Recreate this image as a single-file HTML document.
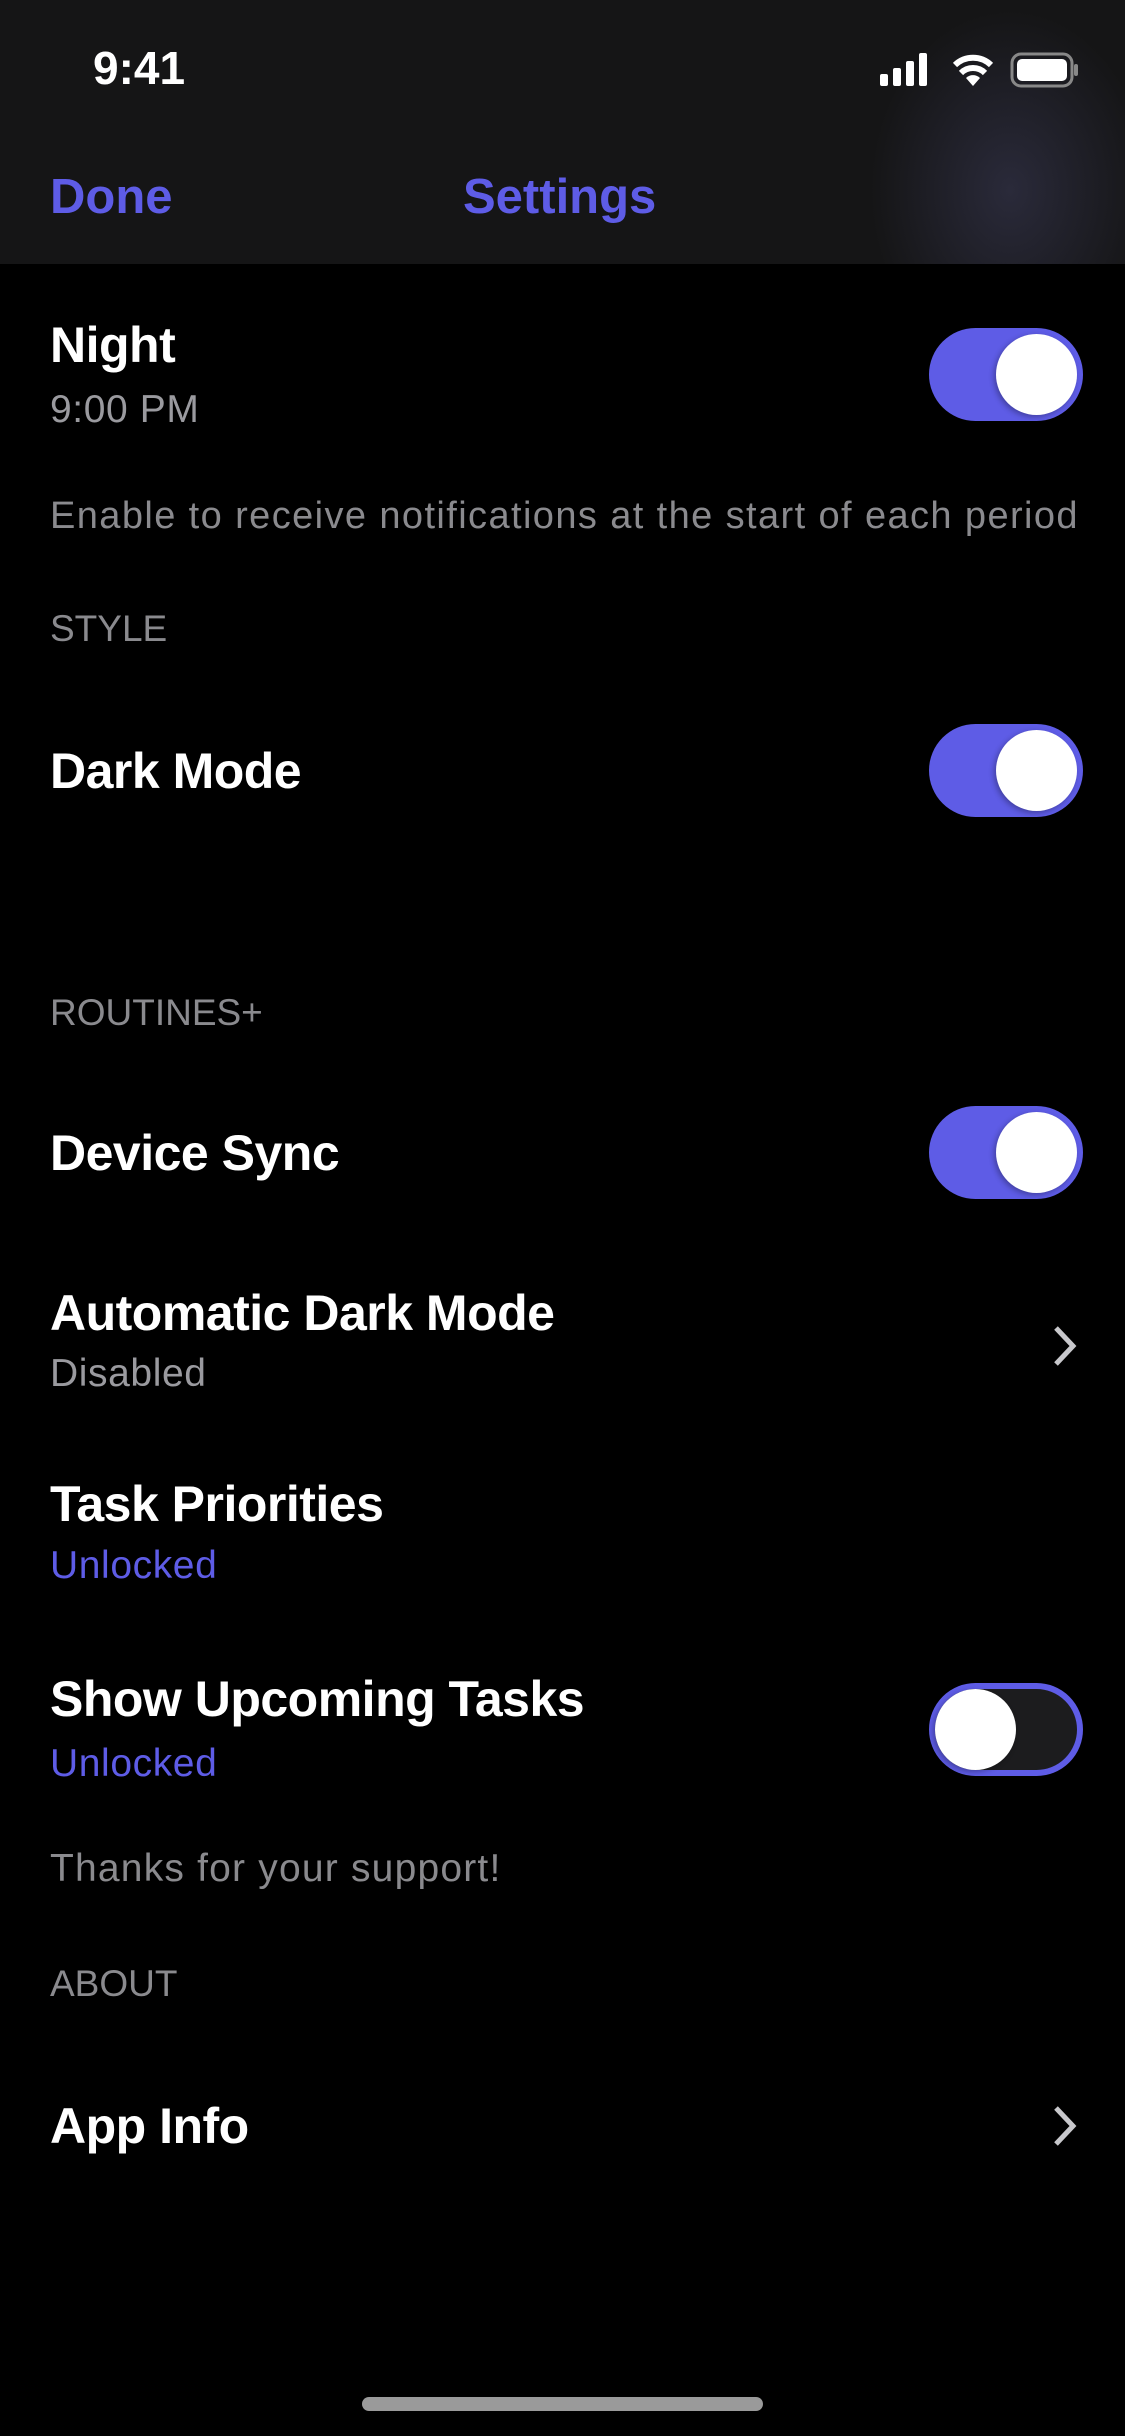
<!DOCTYPE html>
<html><head><meta charset="utf-8"><style>
*{margin:0;padding:0;box-sizing:border-box}
body{width:1125px;height:2436px;background:#000;position:relative;overflow:hidden;font-family:"Liberation Sans",sans-serif;color:#fff}
.t{position:absolute;white-space:nowrap;height:60px;line-height:60px}
.title{font-size:50px;font-weight:bold;left:50px;letter-spacing:-0.5px}
.sub{font-size:39px;left:50px;color:#9a9a9f;letter-spacing:0.6px}
.hdr{font-size:37px;left:50px;color:#8a8a8e}
.pur{color:#5e5ce6}
.tog{position:absolute;left:929px;width:154px;height:93px;border-radius:47px;background:#5e5ce6}
.tog::after{content:"";position:absolute;top:6px;right:6px;width:81px;height:81px;border-radius:50%;background:#fff;box-shadow:-2px 2px 6px rgba(0,0,0,.3)}
.tog.off{background:#1c1c1e;border:6px solid #5e5ce6}
.tog.off::after{top:0;left:0;right:auto;width:81px;height:81px}
.chev{position:absolute;left:1052px;width:26px;height:42px}
</style></head><body>
<div style="position:absolute;left:0;top:0;width:1125px;height:264px;background:radial-gradient(ellipse 140px 180px at 1010px 190px,#2a2a3a,rgba(21,21,23,0)),#151516"></div>
<div class="t" style="left:93px;top:38px;font-size:46px;font-weight:bold">9:41</div>
<svg style="position:absolute;left:878px;top:50px" width="200" height="40" viewBox="0 0 200 40">
<rect x="2" y="24" width="8" height="12" rx="2" fill="#fff"/><rect x="15" y="18" width="8" height="18" rx="2" fill="#fff"/><rect x="28" y="11" width="8" height="25" rx="2" fill="#fff"/><rect x="41" y="3" width="8" height="33" rx="2" fill="#fff"/>
<g transform="translate(22,0)">
<path d="M73 36 L66 28 A10 10 0 0 1 80 28 Z" fill="#fff"/>
<path d="M61 23 A17 17 0 0 1 85 23" stroke="#fff" stroke-width="6" fill="none"/>
<path d="M55 15 A26 26 0 0 1 91 15" stroke="#fff" stroke-width="6" fill="none"/>
</g>
<rect x="134" y="4" width="60" height="32" rx="9" fill="none" stroke="#888" stroke-width="3"/>
<rect x="139" y="9" width="50" height="22" rx="5" fill="#fff"/>
<rect x="196" y="14" width="4" height="12" rx="2" fill="#888"/>
</svg>
<div class="t pur" style="left:50px;top:167px;font-size:49px;font-weight:bold">Done</div>
<div class="t pur" style="left:463px;top:167px;font-size:49px;font-weight:bold">Settings</div>

<div class="t title" style="top:315px">Night</div>
<div class="t sub" style="top:380px">9:00 PM</div>
<div class="tog" style="top:328px"></div>
<div class="t sub" style="top:486px;font-size:38px;color:#8a8a8e;letter-spacing:1.4px">Enable to receive notifications at the start of each period</div>
<div class="t hdr" style="top:599px">STYLE</div>
<div class="t title" style="top:741px">Dark Mode</div>
<div class="tog" style="top:724px"></div>
<div class="t hdr" style="top:983px">ROUTINES+</div>
<div class="t title" style="top:1123px">Device Sync</div>
<div class="tog" style="top:1106px"></div>
<div class="t title" style="top:1283px">Automatic Dark Mode</div>
<div class="t sub" style="top:1344px">Disabled</div>
<svg class="chev" style="top:1325px" viewBox="0 0 26 42"><path d="M4 3 L21 21 L4 39" stroke="#c8c8cc" stroke-width="5" fill="none"/></svg>
<div class="t title" style="top:1474px">Task Priorities</div>
<div class="t sub pur" style="top:1536px">Unlocked</div>
<div class="t title" style="top:1669px">Show Upcoming Tasks</div>
<div class="t sub pur" style="top:1734px">Unlocked</div>
<div class="tog off" style="top:1683px"></div>
<div class="t sub" style="top:1839px;color:#8a8a8e;letter-spacing:1.2px">Thanks for your support!</div>
<div class="t hdr" style="top:1954px">ABOUT</div>
<div class="t title" style="top:2096px">App Info</div>
<svg class="chev" style="top:2105px" viewBox="0 0 26 42"><path d="M4 3 L21 21 L4 39" stroke="#c8c8cc" stroke-width="5" fill="none"/></svg>
<div style="position:absolute;left:362px;top:2397px;width:401px;height:14px;border-radius:7px;background:#9a9a9a"></div>
</body></html>
